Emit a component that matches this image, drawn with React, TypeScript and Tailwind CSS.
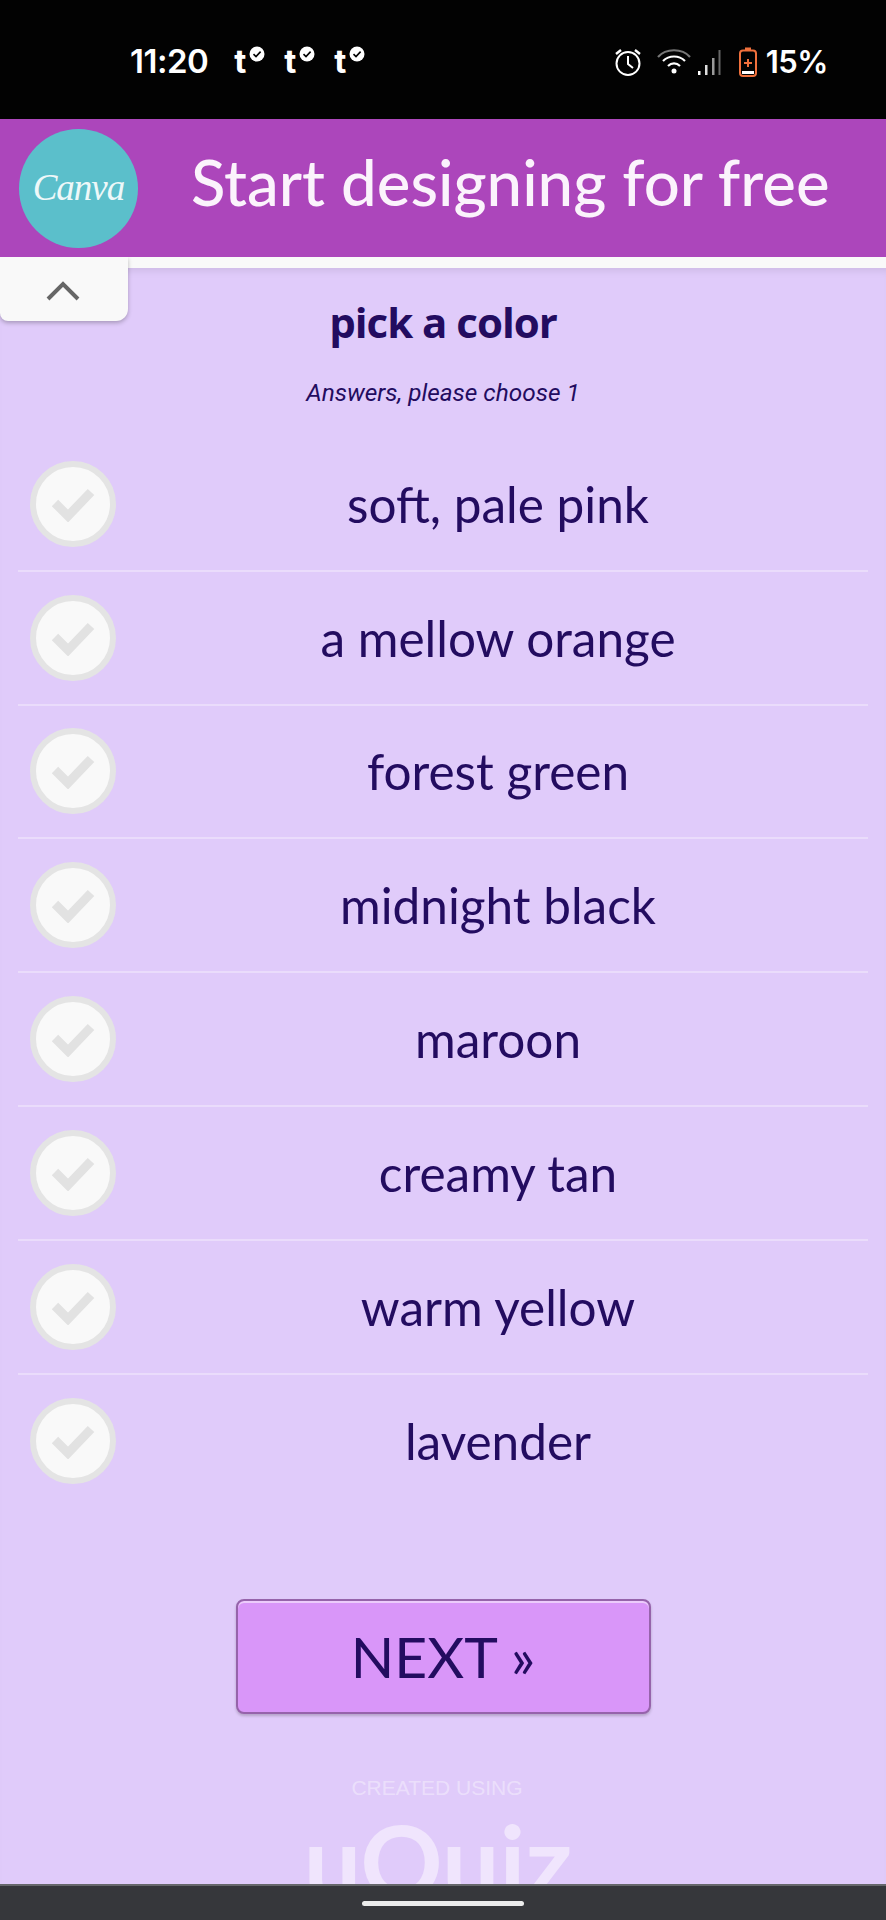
const OPTIONS = [
  'soft, pale pink',
  'a mellow orange',
  'forest green',
  'midnight black',
  'maroon',
  'creamy tan',
  'warm yellow',
  'lavender',
];

function CarrierMark() {
  return (
    <span className="relative block w-[31px] h-[28px]">
      <span className="absolute left-0 top-[1px] text-[33px] leading-[28px] font-bold text-white font-['Inter',sans-serif]">t</span>
      <svg className="absolute right-0 top-0" width="16" height="16" viewBox="0 0 16 16">
        <circle cx="8" cy="8" r="7.5" fill="#fff" />
        <path d="M4.5 8.2 7 10.6l4.6-5" fill="none" stroke="#000" strokeWidth="1.6" />
      </svg>
    </span>
  );
}

function StatusBar() {
  return (
    <div className="h-[119px] shrink-0 bg-[#020202] flex items-start pt-[46px] pl-[130px] pr-[58px]">
      <span className="text-[33px] leading-[30px] font-semibold text-white font-['Inter',sans-serif] tracking-[-0.5px]">11:20</span>
      <div className="flex gap-[19px] ml-[26px]">
        <CarrierMark />
        <CarrierMark />
        <CarrierMark />
      </div>
      <div className="ml-auto flex items-center h-[32px]">
        <svg width="30" height="30" viewBox="0 0 30 30" fill="none" stroke="#fff" strokeWidth="2">
          <circle cx="15" cy="16.500" r="11.500" />
          <path d="M15 9v8l5 4" />
          <path d="M3 7l5-4M27 7l-5-4" strokeWidth="2.400" />
        </svg>
        <svg className="ml-[14px]" width="34" height="26" viewBox="0 0 34 26" fill="none" stroke="#fff" strokeWidth="2.200">
          <path d="M1 8C9-1 25-1 33 8" stroke="#777" />
          <path d="M6 12c6-6 16-6 22 0" />
          <path d="M11 17c3.500-3.500 8.500-3.500 12 0" />
          <circle cx="17" cy="22" r="2.500" fill="#fff" stroke="none" />
        </svg>
        <svg className="ml-[6px]" width="24" height="28" viewBox="0 0 24 28">
          <rect x="1" y="23" width="2.500" height="4" fill="#fff" />
          <rect x="8" y="17" width="2.500" height="10" fill="#ddd" />
          <rect x="15" y="10" width="2.500" height="17" fill="#999" />
          <rect x="21.500" y="2" width="2" height="25" fill="#666" />
        </svg>
        <svg className="ml-[18px]" width="18" height="30" viewBox="0 0 18 30" fill="none">
          <rect x="1" y="3.500" width="16" height="25.500" rx="3" stroke="#f0703c" strokeWidth="2" />
          <rect x="6" y="0.500" width="6" height="3" fill="#f0703c" />
          <path d="M3 24h12v3H3z" fill="#fff" />
          <path d="M9 12v8M5 16h8" stroke="#f0703c" strokeWidth="2" />
        </svg>
        <span className="ml-[9px] text-[31px] leading-[30px] font-semibold text-white font-['Inter',sans-serif] tracking-[-0.5px]">15%</span>
      </div>
    </div>
  );
}

function AdBanner() {
  return (
    <div className="h-[138px] shrink-0 bg-[#ac46bb] flex items-center pl-[19px]">
      <div className="w-[119px] h-[119px] rounded-full bg-[#5bbfcb] flex items-center justify-center">
        <span className="text-[37px] italic text-[#eef8f9] font-['Liberation_Serif',serif] tracking-[-1px]">Canva</span>
      </div>
      <span className="ml-[53px] mb-[12px] text-[63.5px] leading-none font-medium text-[#fbf3fc] font-['Lato',sans-serif] whitespace-nowrap">
        Start designing for free
      </span>
    </div>
  );
}

function OptionRow({ label, last }: { label: string; last: boolean }) {
  return (
    <div className={`h-[133.8px] flex items-center ${last ? '' : 'border-b-2 border-[#eadcfb]'}`}>
      <div className="w-[86px] h-[86px] ml-[12px] rounded-full bg-[#f9f9f9] border-[6px] border-[#e4e4e4] flex items-center justify-center shrink-0">
        <svg width="46" height="36" viewBox="0 0 46 36">
          <path d="M5 17l13 13L41 6" fill="none" stroke="#e2e2e2" strokeWidth="9" />
        </svg>
      </div>
      <span className="flex-1 text-center text-[49.5px] leading-[60px] text-[#230c60] font-['Lato',sans-serif] pl-[12px]">{label}</span>
    </div>
  );
}

export default function App() {
  return (
    <div className="h-[1920px] flex flex-col overflow-hidden bg-[#f9f9f9]">
      <StatusBar />
      <AdBanner />
      <div className="relative flex-1 min-h-0 flex flex-col overflow-hidden pt-[11px]">
        <div className="flex-1 min-h-0 flex flex-col overflow-hidden bg-[#e0cbfa] shadow-[inset_0_8px_8px_-6px_rgba(0,0,0,0.1)] pt-[28px]">
          <h1 className="text-center text-[42px] leading-[52px] font-bold text-[#230c60] font-['Open_Sans',sans-serif] tracking-[-1px]">pick a color</h1>
          <p className="text-center mt-[31px] text-[24.4px] leading-[28px] italic text-[#230c60] font-['Roboto',sans-serif]">Answers, please choose 1</p>
          <div className="mx-[18px] mt-[31px]">
            {OPTIONS.map((label, i) => (
              <OptionRow key={label} label={label} last={i === OPTIONS.length - 1} />
            ))}
          </div>
          <button className="self-center mt-[91px] w-[415px] h-[115px] shrink-0 rounded-[8px] bg-[#d996f9] border-2 border-[#9663ab] shadow-[inset_0_2px_0_rgba(255,255,255,0.5),0_2px_3px_rgba(0,0,0,0.2)] text-[57px] text-[#230c60] font-['Lato',sans-serif]">
            NEXT »
          </button>
          <p className="text-center mt-[62px] text-[21px] leading-[24px] text-white/40 font-['Liberation_Sans',sans-serif] pr-[12px]">CREATED USING</p>
          <p className="text-center text-[102px] leading-[120px] font-bold text-white/50 font-['Lato',sans-serif] pr-[10px]">uQuiz</p>
        </div>
        <div className="absolute left-0 top-0 w-[128px] h-[64px] bg-[#f9f9f9] rounded-br-[12px] rounded-bl-[8px] shadow-[0_2px_4px_rgba(0,0,0,0.25)] flex justify-center pt-[22px] pr-[2px]">
          <svg width="36" height="22" viewBox="0 0 36 22">
            <path d="M3 20 18 5l15 15" fill="none" stroke="#666" strokeWidth="4" />
          </svg>
        </div>
      </div>
      <div className="h-[36px] shrink-0 bg-[#36373b] border-t-2 border-[#66676b] flex justify-center pt-[15px]">
        <div className="w-[162px] h-[5px] rounded-full bg-[#ececec]" />
      </div>
    </div>
  );
}
